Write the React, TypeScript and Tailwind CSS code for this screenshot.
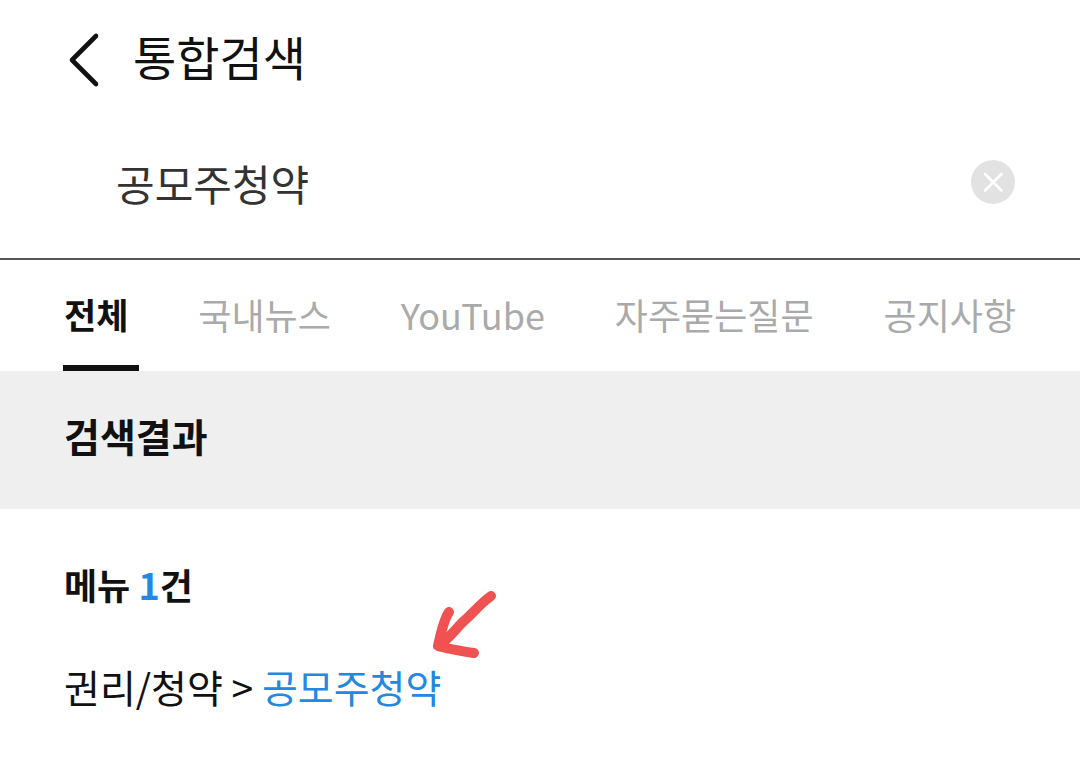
type Tab = {
  id: string;
  label: string;
};

const tabs: Tab[] = [
  { id: "all", label: "전체" },
  { id: "news", label: "국내뉴스" },
  { id: "youtube", label: "YouTube" },
  { id: "faq", label: "자주묻는질문" },
  { id: "notice", label: "공지사항" },
];

const Header = () => {
  return (
    <header className="flex items-start gap-8 px-[65px] pt-8">
      <button type="button" aria-label="뒤로">
        <svg className="h-14 w-9" viewBox="0 0 36 56" fill="none">
          <path
            d="M31 4 L7 28 L31 52"
            stroke="#111111"
            strokeWidth="4.6"
            strokeLinecap="round"
            strokeLinejoin="round"
          />
        </svg>
      </button>
      <h1 className="text-[47px] leading-[48px] text-[#111111]">통합검색</h1>
    </header>
  );
};

const SearchBar = () => {
  return (
    <form className="flex items-center border-b-2 border-[#555555] pt-[62px] pr-16 pb-11 pl-[116px]">
      <input
        type="text"
        aria-label="검색어"
        defaultValue="공모주청약"
        className="h-16 min-w-0 flex-1 bg-transparent text-[42px] text-[#333333] outline-none"
      />
      <button type="reset" aria-label="지우기">
        <svg className="size-[45px]" viewBox="0 0 45 45" fill="none">
          <circle cx="22" cy="22" r="22" fill="#e2e2e2" />
          <path
            d="M14 14 L30.5 30.5 M30.5 14 L14 30.5"
            stroke="#ffffff"
            strokeWidth="2.6"
            strokeLinecap="round"
          />
        </svg>
      </button>
    </form>
  );
};

const Tabs = () => {
  return (
    <nav className="flex h-[111px] justify-between px-16">
      {tabs.map((tab, index) => (
        <button
          key={tab.id}
          type="button"
          className={
            index === 0
              ? "relative text-[35px] leading-[52px] font-bold text-[#111111]"
              : "text-[36px] leading-[52px] text-[#aaaaaa]"
          }
        >
          <span className="block pb-1">{tab.label}</span>
          {index === 0 && (
            <span className="absolute bottom-0 -left-px h-1.5 w-[76px] bg-[#111111]" />
          )}
        </button>
      ))}
    </nav>
  );
};

const Arrow = () => {
  return (
    <svg
      className="absolute -top-17 -right-14 h-17 w-16"
      viewBox="0 0 64 68"
      fill="none"
      aria-hidden="true"
    >
      <path
        d="M58 6 C48 13 41 22 32 30 C23 38 17 48 6 55 M16 22 C11 29 8 42 5 56 C15 59 28 61 41 63"
        stroke="#f05252"
        strokeWidth="10"
        strokeLinecap="round"
        strokeLinejoin="round"
      />
    </svg>
  );
};

const Results = () => {
  return (
    <main>
      <div className="bg-[#efefef] px-16 pt-9 pb-[46px]">
        <h2 className="text-[39px] leading-[56px] font-bold">검색결과</h2>
      </div>
      <section className="px-16 pt-[49px]">
        <h3 className="text-[36px] leading-[52px] font-bold">
          메뉴 <span className="text-[#2588e0]">1</span>건
        </h3>
        <p className="mt-12 text-[39px] leading-[56px]">
          권리/청약 &gt;{" "}
          <a href="#subscription" className="relative text-[#2588e0]">
            공모주청약
            <Arrow />
          </a>
        </p>
      </section>
    </main>
  );
};

export default function App() {
  return (
    <div className="min-h-screen bg-white font-['Noto_Sans_CJK_KR',sans-serif] text-[#111111]">
      <Header />
      <SearchBar />
      <Tabs />
      <Results />
    </div>
  );
}
